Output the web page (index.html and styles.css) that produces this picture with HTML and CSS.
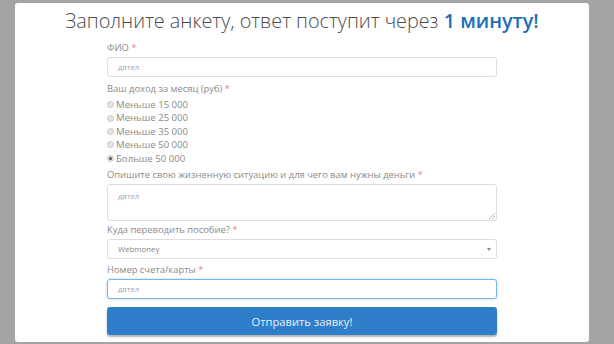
FILE: index.html
```html
<!DOCTYPE html>
<html lang="ru">
<head>
<meta charset="utf-8">
<link rel="stylesheet" href="styles.css">
</head>
<body>
<div class="panel">
  <h1 class="title">Заполните анкету, ответ поступит через <b>1 минуту!</b></h1>
  <form class="form">
    <label class="lbl">ФИО <span class="req">*</span></label>
    <div class="field input"><span class="ph">дятел</span></div>

    <label class="lbl lbl-income">Ваш доход за месяц (руб) <span class="req">*</span></label>
    <div class="radios">
      <div class="radio"><span class="dot"></span>Меньше 15 000</div>
      <div class="radio"><span class="dot"></span>Меньше 25 000</div>
      <div class="radio"><span class="dot"></span>Меньше 35 000</div>
      <div class="radio"><span class="dot"></span>Меньше 50 000</div>
      <div class="radio"><span class="dot on"></span>Больше 50 000</div>
    </div>

    <label class="lbl lbl-situation">Опишите свою жизненную ситуацию и для чего вам нужны деньги <span class="req">*</span></label>
    <div class="field textarea"><span class="ph">дятел</span>
      <svg class="grip" width="6" height="6" viewBox="0 0 6 6"><path d="M6 0 L0 6 M6 3 L3 6" stroke="#aaa" stroke-width="0.8"/></svg>
    </div>

    <label class="lbl lbl-where">Куда переводить пособие? <span class="req">*</span></label>
    <div class="field select"><span class="val">Webmoney</span><span class="caret"></span></div>

    <label class="lbl lbl-number">Номер счета/карты <span class="req">*</span></label>
    <div class="field input focus"><span class="ph">дятел</span></div>

    <button type="button" class="btn">Отправить заявку!</button>
  </form>
</div>
</body>
</html>
```
FILE: styles.css
```css
html, body {
  margin: 0;
  padding: 0;
  background: #a4a4a4;
  font-family: "Open Sans", "Noto Sans", sans-serif;
}
.panel {
  margin: 3px 0 0 15px;
  width: 574px;
  height: 339px;
  background: #fff;
  border-radius: 3px;
  overflow: hidden;
}
.title {
  margin: 0;
  padding-top: 4px;
  font-size: 19.8px;
  line-height: 28px;
  font-weight: 300;
  color: #4a4a4a;
  text-align: center;
}
.title b {
  font-weight: 600;
  color: #1d6fb8;
}
.form {
  margin: 6px 0 0 92px;
  width: 390px;
  display: flex;
  flex-direction: column;
}
.lbl {
  font-size: 9.4px;
  line-height: 14px;
  color: #8a8a8a;
  font-weight: 400;
}
.req { color: #ee8585; }
.lbl-income { margin-top: 5px; }
.lbl-situation { margin-top: 3px; }
.lbl-where { margin-top: 2px; }
.lbl-number { margin-top: 4px; }
.field {
  box-sizing: border-box;
  border: 1px solid #ddd;
  border-radius: 3px;
  background: #fff;
  font-size: 7.8px;
  position: relative;
  padding-left: 10px;
  margin-top: 2px;
}
.input {
  height: 20px;
  display: flex;
  align-items: center;
}
.ph { color: #a8a8a8; }
.textarea {
  height: 37px;
  padding-top: 6px;
  line-height: 10px;
}
.grip {
  position: absolute;
  right: 1px;
  bottom: 1px;
}
.select {
  height: 20px;
  display: flex;
  align-items: center;
  justify-content: space-between;
  padding-right: 5px;
  color: #858585;
}
.caret {
  width: 0;
  height: 0;
  border-left: 2px solid transparent;
  border-right: 2px solid transparent;
  border-top: 3px solid #888;
}
.focus {
  border-color: #7db4e6;
  box-shadow: 0 0 3px rgba(102, 175, 233, 0.5);
}
.radios {
  display: flex;
  flex-direction: column;
  margin-top: 2px;
}
.radio {
  display: flex;
  align-items: center;
  font-size: 9.6px;
  line-height: 13.4px;
  color: #8a8a8a;
}
.dot {
  box-sizing: border-box;
  width: 7px;
  height: 7px;
  border-radius: 50%;
  border: 1px solid #c8c8c8;
  background: #e6e6e6;
  margin-right: 2px;
  position: relative;
}
.dot.on::after {
  content: "";
  position: absolute;
  left: 1px;
  top: 1px;
  width: 3px;
  height: 3px;
  border-radius: 50%;
  background: #555;
}
.btn {
  margin-top: 8px;
  height: 28px;
  border: 0;
  border-radius: 3px;
  background: #2f7ec9;
  color: #e8f0fa;
  font-family: "Open Sans", sans-serif;
  font-size: 11.2px;
  box-shadow: 0 2px 2px rgba(0, 0, 0, 0.3);
  padding: 0;
}
```
